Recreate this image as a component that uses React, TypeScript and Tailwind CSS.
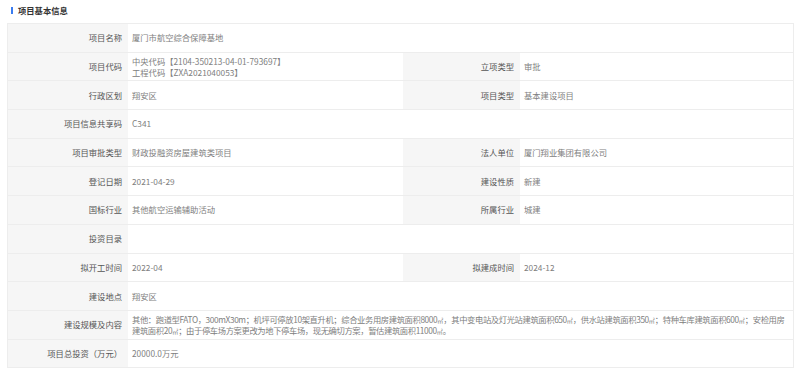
import React from "react";

type Cell = { label: string; value?: React.ReactNode };
type Row = Cell[];

const M2 = () => <span className="text-[6px] leading-none tracking-normal">㎡</span>;

const rows: Row[] = [
  [{ label: "项目名称", value: "厦门市航空综合保障基地" }],
  [
    {
      label: "项目代码",
      value: (
        <>
          <div>中央代码【2104-350213-04-01-793697】</div>
          <div>工程代码【ZXA2021040053】</div>
        </>
      ),
    },
    { label: "立项类型", value: "审批" },
  ],
  [
    { label: "行政区划", value: "翔安区" },
    { label: "项目类型", value: "基本建设项目" },
  ],
  [{ label: "项目信息共享码", value: "C341" }],
  [
    { label: "项目审批类型", value: "财政投融资房屋建筑类项目" },
    { label: "法人单位", value: "厦门翔业集团有限公司" },
  ],
  [
    { label: "登记日期", value: "2021-04-29" },
    { label: "建设性质", value: "新建" },
  ],
  [
    { label: "国标行业", value: "其他航空运输辅助活动" },
    { label: "所属行业", value: "城建" },
  ],
  [{ label: "投资目录", value: "" }],
  [
    { label: "拟开工时间", value: "2022-04" },
    { label: "拟建成时间", value: "2024-12" },
  ],
  [{ label: "建设地点", value: "翔安区" }],
  [
    {
      label: "建设规模及内容",
      value: (
        <p className="tracking-[-0.38px]">
          其他：跑道型FATO，300mX30m；机坪可停放10架直升机；综合业务用房建筑面积8000
          <M2 />，其中变电站及灯光站建筑面积650
          <M2 />，供水站建筑面积350
          <M2 />；特种车库建筑面积600
          <M2 />；安检用房建筑面积20
          <M2 />；由于停车场方案更改为地下停车场，现无确切方案，暂估建筑面积11000
          <M2 />。
        </p>
      ),
    },
  ],
  [{ label: "项目总投资（万元）", value: "20000.0万元" }],
];

function Label({ text, wide }: { text: string; wide?: boolean }) {
  return (
    <div
      className={`flex shrink-0 items-center justify-end bg-[#f6f6f6] pr-[6px] text-[#555] ${
        wide ? "w-[120px]" : "w-[117px]"
      }`}
    >
      {text}
    </div>
  );
}

export default function App() {
  return (
    <div
      className="h-[368px] w-[800px] overflow-hidden bg-white text-[8.3px] leading-[11px]"
      style={{ fontFamily: '"Noto Sans CJK SC", "Noto Sans", sans-serif' }}
    >
      <div className="flex h-[23px] items-center gap-[5px] pl-[11px] pb-[3px]">
        <span className="h-[7px] w-[2px] bg-[#3a7cf0]" />
        <span className="font-bold text-[#333]">项目基本信息</span>
      </div>
      <div className="ml-[7px] w-[787px] border-l border-r border-t border-[#ededed]">
        {rows.map((row, i) => (
          <div key={i} className="flex h-[28.7px] border-b border-[#ededed]">
            {row.map((cell, j) => (
              <React.Fragment key={j}>
                <Label text={cell.label} wide={j === 0} />
                <div
                  className={`flex flex-col justify-center px-[4px] text-[#808080] ${
                    row.length === 1 ? "flex-1" : j === 0 ? "w-[275px]" : "flex-1"
                  }`}
                >
                  {cell.value}
                </div>
              </React.Fragment>
            ))}
          </div>
        ))}
      </div>
    </div>
  );
}
